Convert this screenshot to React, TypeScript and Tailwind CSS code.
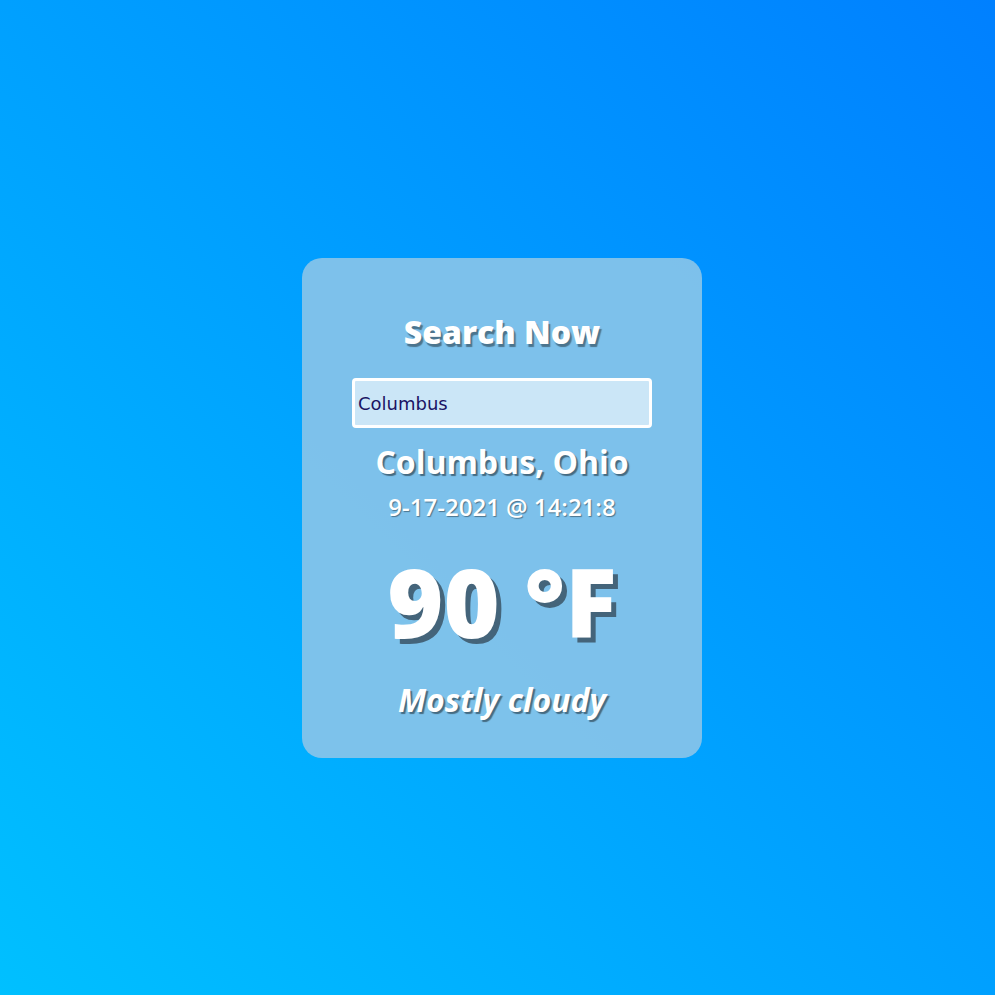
import React from "react";

export default function App() {
  return (
    <div
      className="w-full h-[995px] flex items-center justify-center pl-[9px] pt-[21px] bg-[linear-gradient(45deg,#00c0ff,#0080ff)]"
      style={{ fontFamily: '"Open Sans", sans-serif' }}
    >
      <div className="w-[400px] h-[500px] rounded-[20px] bg-[#84c3ea]/95 flex flex-col items-center pt-[51px]">
        <h1 className="text-[32px] leading-[46px] font-extrabold text-white [text-shadow:2px_3px_1px_rgba(0,0,0,0.4)]">
          Search Now
        </h1>
        <input
          defaultValue="Columbus"
          className="mt-[23px] w-[300px] h-[50px] border-[3px] border-white rounded-[4px] bg-white/60 px-[3px] text-[#1b1464] outline-none"
          style={{ fontFamily: '"DejaVu Sans", sans-serif', fontSize: 18 }}
        />
        <div className="mt-[12px] text-[32px] leading-[44px] font-bold text-white [text-shadow:2px_2px_1px_rgba(0,0,0,0.45)]">
          Columbus, Ohio
        </div>
        <div className="mt-[6px] text-[24px] leading-[34px] font-semibold text-white [text-shadow:1px_1px_1px_rgba(0,0,0,0.4)]">
          9-17-2021 @ 14:21:8
        </div>
        <div className="mt-[22px] text-[96px] leading-[110px] font-extrabold text-white [text-shadow:5px_5px_0_#44647a]">
          90 °F
        </div>
        <div className="mt-[22px] text-[32px] leading-[44px] font-bold italic text-white [text-shadow:2px_2px_1px_rgba(0,0,0,0.45)]">
          Mostly cloudy
        </div>
      </div>
    </div>
  );
}
